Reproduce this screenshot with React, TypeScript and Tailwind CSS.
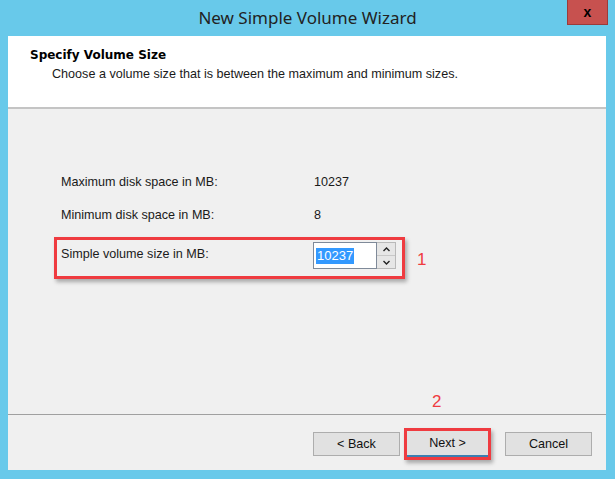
import React from 'react';

function Spinner() {
  return (
    <div className="flex h-[27px]">
      <div className="flex w-[64px] items-center border border-[#7f8a99] bg-white pl-[2px]">
        <span className="bg-[#3399ff] px-px text-[13px] leading-[16px] text-white">10237</span>
      </div>
      <div className="flex w-[19px] flex-col border border-l-0 border-[#b9b9b9] bg-[#e6e6e6]">
        <div className="flex flex-1 items-center justify-center border-b border-[#c8c8c8]">
          <svg width="7" height="5" viewBox="0 0 7 5">
            <path d="M0.5 4 L3.5 1 L6.5 4" stroke="#222" strokeWidth="1.4" fill="none" />
          </svg>
        </div>
        <div className="flex flex-1 items-center justify-center">
          <svg width="7" height="5" viewBox="0 0 7 5">
            <path d="M0.5 1 L3.5 4 L6.5 1" stroke="#222" strokeWidth="1.4" fill="none" />
          </svg>
        </div>
      </div>
    </div>
  );
}

function WinButton({ label }: { label: string }) {
  return (
    <button className="h-[24px] w-[87px] border border-[#adadad] bg-[#e1e1e1] text-[12.6px] text-[#111]">
      {label}
    </button>
  );
}

export default function App() {
  return (
    <div
      className="flex h-[479px] w-[615px] flex-col bg-[#68c9ea] text-[12.6px] text-[#1a1a1a]"
      style={{ fontFamily: '"Liberation Sans", Arial, sans-serif' }}
    >
      {/* title bar */}
      <div className="relative flex h-[36px] items-center justify-center">
        <span
          className="text-[17px] text-[#222]"
          style={{ fontFamily: '"Noto Sans", "Open Sans", sans-serif' }}
        >
          New Simple Volume Wizard
        </span>
        <div className="absolute right-[7px] top-0 flex h-[25px] w-[41px] items-center justify-center border border-t-0 border-[#9b3b3b] bg-[#c7514f]">
          <span className="text-[14px] font-bold leading-none text-black">x</span>
        </div>
      </div>

      {/* client area */}
      <div className="mb-[9px] ml-[8px] mr-[9px] flex flex-1 flex-col">
        <div className="h-[73px] border-b-2 border-b-[#c4c4c4] bg-white pl-[22px] pt-[11px]">
          <div
            className="text-[12px] font-bold leading-[16px] text-black"
            style={{ fontFamily: '"DejaVu Sans", Verdana, sans-serif' }}
          >
            Specify Volume Size
          </div>
          <div className="pl-[22px] pt-[3px] leading-[16px] text-[#1a1a1a]">
            Choose a volume size that is between the maximum and minimum sizes.
          </div>
        </div>

        <div className="flex flex-1 flex-col bg-[#f0f0f0]">
          <div className="flex flex-1 flex-col pt-[65px]">
            <div className="flex h-[16px] items-center pl-[53px]">
              <span className="w-[253px]">Maximum disk space in MB:</span>
              <span>10237</span>
            </div>
            <div className="mt-[17px] flex h-[16px] items-center pl-[53px]">
              <span className="w-[253px]">Minimum disk space in MB:</span>
              <span>8</span>
            </div>
            <div className="mt-[14px] flex items-center pl-[46px]">
              <div className="flex h-[42px] w-[351px] items-start border-[3px] border-[#ef3b40] pl-[4px] pt-[2px] shadow-[2px_3px_4px_rgba(0,0,0,0.3)]">
                <span className="mt-[3px] w-[252px]">Simple volume size in MB:</span>
                <Spinner />
              </div>
              <span className="ml-[12px] mt-[4px] text-[17px] text-[#ef3b40]">1</span>
            </div>
            <div className="flex flex-1 items-end pb-[2px] pl-[424px]">
              <span className="text-[17px] leading-[20px] text-[#ef3b40]">2</span>
            </div>
          </div>

          <div className="border-t border-t-[#a0a0a0]" />
          <div className="flex h-[55px] items-start pl-[305px] pt-[17px]">
            <WinButton label="< Back" />
            <div className="-mt-[4px] ml-[4px] border-[3px] border-[#ef3b40] shadow-[2px_3px_4px_rgba(0,0,0,0.3)]">
              <div className="h-[26px] w-[81px] border-b-2 border-[#3c7fb1] bg-[#e1e1e1] text-center text-[12.6px] leading-[24px] text-[#111]">
                Next &gt;
              </div>
            </div>
            <div className="ml-[14px]">
              <WinButton label="Cancel" />
            </div>
          </div>
        </div>
      </div>
    </div>
  );
}
